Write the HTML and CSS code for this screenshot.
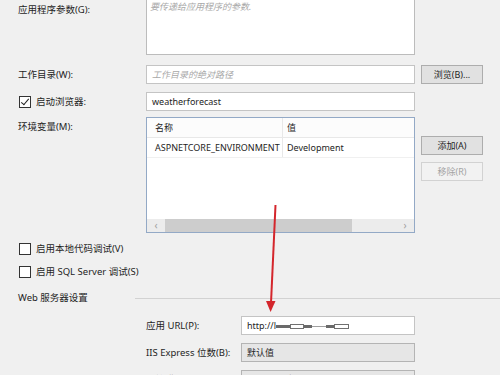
FILE: index.html
```html
<!DOCTYPE html>
<html>
<head>
    <title>调试属性</title>
    <link rel="stylesheet" href="styles.css">
</head>
<body>
    <div class="form">
        <div class="row row-top">
            <div class="lbl">应用程序参数(G):</div>
            <div class="textarea"><span class="hint">要传递给应用程序的参数.</span></div>
        </div>

        <div class="row row-dir">
            <div class="lbl">工作目录(W):</div>
            <div class="field"><span class="hint">工作目录的绝对路径</span></div>
            <div class="btn">浏览(B)...</div>
        </div>

        <div class="row row-browser">
            <div class="lbl check-lbl"><span class="box checked"></span>启动浏览器:</div>
            <div class="field">weatherforecast</div>
        </div>

        <div class="row row-top row-env">
            <div class="lbl">环境变量(M):</div>
            <div class="grid-box">
                <div class="grid-head">
                    <div class="cell c1">名称</div>
                    <div class="cell c2">值</div>
                </div>
                <div class="grid-row">
                    <div class="cell c1">ASPNETCORE_ENVIRONMENT</div>
                    <div class="cell c2">Development</div>
                </div>
                <div class="grid-space"></div>
                <div class="hscroll">
                    <span class="arr">&#8249;</span>
                    <span class="thumb"></span>
                    <span class="track"></span>
                    <span class="arr">&#8250;</span>
                </div>
            </div>
            <div class="side-btns">
                <div class="btn">添加(A)</div>
                <div class="btn disabled">移除(R)</div>
            </div>
        </div>

        <div class="check-row first"><span class="box"></span>启用本地代码调试(V)</div>
        <div class="check-row"><span class="box"></span>启用 SQL Server 调试(S)</div>

        <div class="section">
            <span class="section-title">Web 服务器设置</span>
            <span class="section-line"></span>
        </div>

        <div class="server">
            <div class="srow first">
                <div class="slbl">应用 URL(P):</div>
                <div class="field url">http://l<span class="bar w14"></span><span class="rect w12"></span><span class="bar w8"></span><span class="thin w14"></span><span class="bar w8"></span><span class="rect w13"></span></div>
            </div>
            <div class="srow">
                <div class="slbl">IIS Express 位数(B):</div>
                <div class="select">默认值</div>
            </div>
            <div class="srow">
                <div class="slbl">托管模型(M):</div>
                <div class="select">默认(进程内)</div>
            </div>
        </div>
    </div>

    <svg class="arrow" width="500" height="375" viewBox="0 0 500 375">
        <line x1="275.5" y1="205" x2="271" y2="303" stroke="#d4262c" stroke-width="2"/>
        <polygon points="266,301 275.5,301 270.6,312" fill="#d4262c"/>
    </svg>
</body>
</html>
```

FILE: styles.css
```css
body {
    margin: 0;
    height: 375px;
    overflow: hidden;
    position: relative;
    background-color: #f0f0f0;
    color: #1e1e1e;
    font-family: "Noto Sans", "Noto Sans CJK SC", sans-serif;
    font-size: 9px;
    line-height: 12px;
}
.form {
    padding-left: 18px;
}
.row {
    display: grid;
    grid-template-columns: 122px 269px 62px;
    column-gap: 6px;
    align-items: center;
}
.row-top {
    align-items: start;
}
.row-top .lbl {
    padding-top: 4px;
}
.lbl {
    font-size: 9.5px;
}
.textarea {
    margin-top: -1px;
    height: 56px;
    box-sizing: border-box;
    border: 1px solid #bcbcbc;
    background-color: #fff;
    padding: 1px 3px;
}
.hint {
    color: #a8a8a8;
    font-style: italic;
}
.field {
    height: 19px;
    box-sizing: border-box;
    border: 1px solid #c4c4c4;
    background-color: #fff;
    padding: 0 5px;
    line-height: 17px;
    white-space: nowrap;
    overflow: hidden;
}
.row-dir {
    margin-top: 10px;
}
.row-browser {
    margin-top: 8px;
}
.row-env {
    margin-top: 6px;
}
.btn {
    height: 19px;
    box-sizing: border-box;
    border: 1px solid #adadad;
    background-color: #e1e1e1;
    text-align: center;
    line-height: 17px;
}
.btn.disabled {
    border-color: #d2d2d2;
    background-color: #f2f2f2;
    color: #a3a3a3;
}
.side-btns {
    display: flex;
    flex-direction: column;
    gap: 7px;
    padding-top: 19px;
}
.check-lbl {
    display: flex;
    align-items: center;
}
.box {
    display: inline-block;
    width: 12px;
    height: 12px;
    box-sizing: border-box;
    border: 1px solid #333;
    background-color: #fff;
    margin: 0 5px 0 1px;
    position: relative;
}
.box.checked::after {
    content: "";
    position: absolute;
    left: 3px;
    top: 0px;
    width: 3px;
    height: 7px;
    border: solid #222;
    border-width: 0 1.5px 1.5px 0;
    transform: rotate(40deg);
}
.grid-box {
    height: 116px;
    box-sizing: border-box;
    border: 1px solid #93a9c6;
    background-color: #fff;
    display: flex;
    flex-direction: column;
}
.grid-head,
.grid-row {
    display: flex;
    height: 19px;
    border-bottom: 1px solid #f0f0f0;
}
.grid-head {
    background-color: #fcfcfc;
    border-bottom-color: #e8e8e8;
}
.cell {
    line-height: 19px;
    padding-left: 7px;
    white-space: nowrap;
}
.c1 {
    width: 127px;
    border-right: 1px solid #e8e8e8;
    padding-left: 8px;
}
.c2 {
    flex: 1;
    padding-left: 4px;
}
.grid-space {
    flex: 1;
}
.hscroll {
    display: flex;
    height: 13px;
    background-color: #ececec;
    align-items: stretch;
}
.arr {
    width: 18px;
    text-align: center;
    color: #a0a0a0;
    font-size: 10px;
    line-height: 13px;
}
.thumb {
    width: 187px;
    background-color: #cdcdcd;
}
.track {
    flex: 1;
}
.check-row {
    display: flex;
    align-items: center;
    height: 16px;
    margin-top: 7px;
    font-size: 9.5px;
}
.check-row.first {
    margin-top: 8px;
}
.section {
    display: flex;
    align-items: center;
    height: 16px;
    margin-top: 10px;
    font-size: 9.5px;
}
.section-title {
    width: 117px;
}
.section-line {
    flex: 1;
    height: 1px;
    background-color: #d2d2d2;
}
.server {
    padding-left: 128px;
}
.srow {
    display: grid;
    grid-template-columns: 95px 174px;
    align-items: center;
    margin-top: 8px;
}
.slbl {
    font-size: 9.5px;
}
.srow.first {
    margin-top: 10px;
}
.select {
    height: 19px;
    box-sizing: border-box;
    border: 1px solid #b4b4b4;
    background-color: #e6e6e6;
    padding: 0 5px;
    line-height: 17px;
}
.url span {
    display: inline-block;
    vertical-align: middle;
}
.bar {
    height: 3px;
    background-color: #6a6a6a;
}
.rect {
    height: 3px;
    border: 1px solid #707070;
}
.thin {
    height: 1px;
    background-color: #a0a0a0;
}
.w8 { width: 8px; }
.w12 { width: 12px; }
.w13 { width: 13px; }
.w14 { width: 14px; }
.arrow {
    position: absolute;
    left: 0;
    top: 0;
    pointer-events: none;
}
```
